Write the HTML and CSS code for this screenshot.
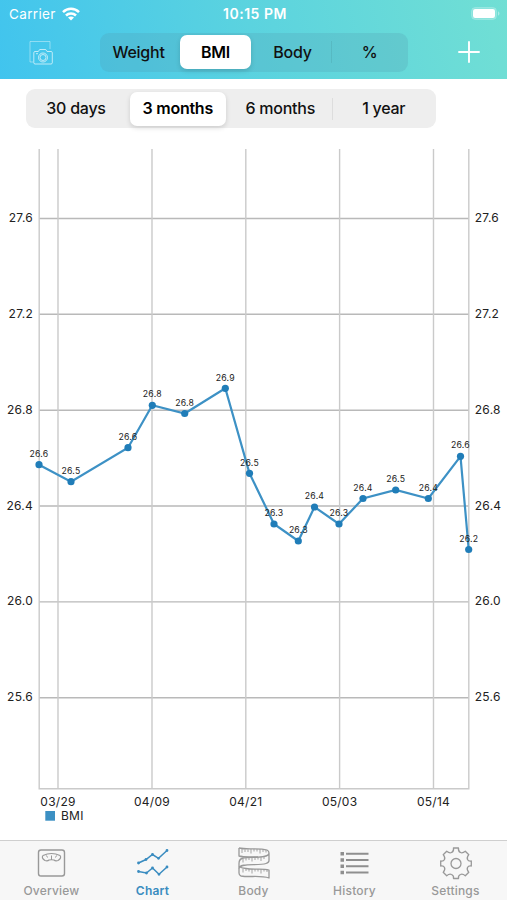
FILE: index.html
```html
<!DOCTYPE html>
<html lang="en">
  <head>
    <meta charset="UTF-8" />
    <meta name="viewport" content="width=device-width, initial-scale=1.0" />

    <title>BMI Chart</title>

    <link rel="stylesheet" href="styles.css">
  </head>
  <body>
    <header class="header">
      <div class="status">
        <div class="carrier">
          <span>Carrier</span>
          <svg width="18" height="14" viewBox="0 0 18 14" fill="none" stroke="#fff" stroke-width="2.5">
            <path d="M1 5.2C5.5 .7 12.5 .7 17 5.2" />
            <path d="M4 8.5c2.8-2.8 7.2-2.8 10 0" />
            <path d="M9 13.6 6 10.5c1.7-1.5 4.3-1.5 6 0z" fill="#fff" stroke="none" />
          </svg>
        </div>
        <div class="time">10:15 PM</div>
        <div class="power">
          <svg width="31" height="15" viewBox="0 0 31 15">
            <rect x="1.5" y="1.5" width="25" height="12" rx="3.8" fill="#fff" fill-opacity=".2" stroke="#fff" stroke-opacity=".2" />
            <rect x="3" y="3" width="22" height="9" rx="2.2" fill="#fff" />
            <path d="M28 5.3c2 .9 2 3.5 0 4.4z" fill="#fff" fill-opacity=".4" />
          </svg>
        </div>
      </div>

      <div class="navbar">
        <svg class="camera" width="26" height="26" viewBox="0 0 26 26" fill="none" stroke="#fff" stroke-opacity=".65">
          <path d="M4 22H1V1.5h20V9" stroke-opacity=".4" />
          <path d="M6 11.5h3.3l1.4-2h6l1.4 2h4c.7 0 1.2.5 1.2 1.2v10.1c0 .7-.5 1.2-1.2 1.2H6c-.7 0-1.2-.5-1.2-1.2V12.7C4.8 12 5.3 11.5 6 11.5z" />
          <circle cx="14" cy="17.5" r="4.5" />
          <circle cx="14" cy="17.5" r="3" />
          <path d="M7 13.7h2" />
        </svg>

        <div class="segments metric">
          <button class="segment">Weight</button>
          <button class="segment selected">BMI</button>
          <button class="segment">Body</button>
          <button class="segment divided">%</button>
        </div>

        <svg class="plus" width="22" height="22" viewBox="0 0 22 22" stroke="#fff" stroke-width="1.9" stroke-linecap="round">
          <path d="M11 1v20M1 11h20" />
        </svg>
      </div>
    </header>

    <main>
      <div class="segments range">
        <button class="segment">30 days</button>
        <button class="segment selected">3 months</button>
        <button class="segment">6 months</button>
        <button class="segment divided">1 year</button>
      </div>

      <svg class="chart" width="507" height="690" viewBox="0 140 507 690">
        <g class="grid">
          <path d="M39 218.5H469M39 314.3H469M39 410.2H469M39 506H469M39 601.9H469M39 697.7H469" />
          <path class="vertical" d="M58 149V789M152 149V789M245.8 149V789M339.6 149V789M433.5 149V789" />
          <path class="border" d="M39.2 149V788.7H468.8V149" />
        </g>

        <g class="axis left">
          <text x="33" y="221.7">27.6</text>
          <text x="33" y="317.7">27.2</text>
          <text x="33" y="413.5">26.8</text>
          <text x="33" y="509.5">26.4</text>
          <text x="33" y="605.3">26.0</text>
          <text x="33" y="701.2">25.6</text>
        </g>
        <g class="axis">
          <text x="474.8" y="221.7">27.6</text>
          <text x="474.8" y="317.7">27.2</text>
          <text x="474.8" y="413.5">26.8</text>
          <text x="474.8" y="509.5">26.4</text>
          <text x="474.8" y="605.3">26.0</text>
          <text x="474.8" y="701.2">25.6</text>
        </g>
        <g class="axis dates">
          <text x="58" y="805.8">03/29</text>
          <text x="152" y="805.8">04/09</text>
          <text x="245.8" y="805.8">04/21</text>
          <text x="339.6" y="805.8">05/03</text>
          <text x="433.5" y="805.8">05/14</text>
        </g>

        <polyline class="line" points="39,464.7 71,481.7 128,447.7 152.3,405.3 184.7,413.5 225.3,388.3 249.5,473.3 274,524 298.3,541 314.5,507 339,524 363,498.5 395.7,490 428.3,498.5 460.5,456.3 468.7,549.5" />
        <g class="dots">
          <circle cx="39" cy="464.7" r="3.6" />
          <circle cx="71" cy="481.7" r="3.6" />
          <circle cx="128" cy="447.7" r="3.6" />
          <circle cx="152.3" cy="405.3" r="3.6" />
          <circle cx="184.7" cy="413.5" r="3.6" />
          <circle cx="225.3" cy="388.3" r="3.6" />
          <circle cx="249.5" cy="473.3" r="3.6" />
          <circle cx="274" cy="524" r="3.6" />
          <circle cx="298.3" cy="541" r="3.6" />
          <circle cx="314.5" cy="507" r="3.6" />
          <circle cx="339" cy="524" r="3.6" />
          <circle cx="363" cy="498.5" r="3.6" />
          <circle cx="395.7" cy="490" r="3.6" />
          <circle cx="428.3" cy="498.5" r="3.6" />
          <circle cx="460.5" cy="456.3" r="3.6" />
          <circle cx="468.7" cy="549.5" r="3.6" />
        </g>
        <g class="values">
          <text x="39" y="456.8">26.6</text>
          <text x="71" y="473.8">26.5</text>
          <text x="128" y="439.9">26.6</text>
          <text x="152.3" y="397.4">26.8</text>
          <text x="184.7" y="405.7">26.8</text>
          <text x="225.3" y="380.6">26.9</text>
          <text x="249.5" y="465.5">26.5</text>
          <text x="274" y="516.2">26.3</text>
          <text x="298.3" y="533.3">26.3</text>
          <text x="314.5" y="499.2">26.4</text>
          <text x="339" y="516.2">26.3</text>
          <text x="363" y="490.8">26.4</text>
          <text x="395.7" y="482.3">26.5</text>
          <text x="428.3" y="490.8">26.4</text>
          <text x="460.5" y="448.2">26.6</text>
          <text x="468.7" y="542">26.2</text>
        </g>

        <rect x="45.3" y="811" width="9.7" height="9.7" fill="#3c90c3" />
        <text class="legend" x="61" y="820.3">BMI</text>
      </svg>
    </main>

    <nav class="tabbar">
      <div class="tab">
        <svg width="32" height="34" viewBox="0 0 32 34" fill="none" stroke="#999" stroke-width="1.4">
          <rect x="2.5" y="4" width="26" height="26" rx="2.5" />
          <path d="M7 9.5Q15.500 5.500 24 9.500Q26 12 22 14.500Q19.500 15.500 18 14Q15.500 13.500 13 14Q11.500 15.500 9 14.500Q5 12 7 9.500z" stroke-width="1.2" />
          <path d="M15.500 14V9.500M11.500 11.500l-1-2M19.500 11.500l1-2" stroke-width="1" />
        </svg>
        <span>Overview</span>
      </div>
      <div class="tab active">
        <svg width="32" height="34" viewBox="0 0 32 34" fill="none" stroke="#3a8cc0" stroke-width="1.5">
          <path d="M1.5 17 9 13.5l6.500-5 6 3.800L30 4.500" />
          <path d="M1.5 25.5 9.5 27l6-5 6.500 6.300L30 21" />
          <path d="M1.5 17h0M9 13.5h0M15.500 8.500h0M21.500 12.300h0M30 4.500h0M1.500 25.500h0M9.500 27h0M15.500 22h0M22 28.300h0M30 21h0" stroke-width="2.8" stroke-linecap="round" />
        </svg>
        <span>Chart</span>
      </div>
      <div class="tab">
        <svg width="32" height="34" viewBox="0 0 32 34" fill="none" stroke="#999" stroke-width="1.3" stroke-linejoin="round">
          <path d="M1 2C9 4 21 1.5 29 4Q31 5 31 7V14.5Q31 16.5 28 17.5C20 20 1 16.5 1 22.5V17.5Q1 13 5 12C12 10.5 31 13 31 7" />
          <path d="M1 2v8C7 11.5 13 10.5 20 11" />
          <path d="M1 22.5V27Q1 29.5 3 30C12 31.5 22 29 31 32V24C24 22 16 24 8 22.5Q3 22 1 20.5" />
          <path d="M4 3v4M7 3.5V6M10 3.5V6M13 3v4.5M16 3v2.5M19 3v2.5M22 3v4.5M25 3.5V6M28 4v2.5M5 12.5v4M8 12v2.5M11 11.5V14M14 11.5v4M17 11.5V14M20 11v2.5M23 11v4M26 10.5V13M5 22.5v4M8 22.5V25M11 23v2.5M14 23v4.5M17 23v2.5M20 23v2.5M23 23v4.5M26 23v2.5M29 23.5V26" stroke-width=".9" />
        </svg>
        <span>Body</span>
      </div>
      <div class="tab">
        <svg width="32" height="34" viewBox="0 0 32 34" fill="#8f8f8f">
          <path d="M1.5 6H5v3.500H1.500zM1.500 12.300H5v3.500H1.500zM1.500 18.500H5V22H1.500zM1.500 24.700H5v3.500H1.500z" />
          <path d="M7 6.700H29.500v2.100H7zM7 13H29.500v2.100H7zM7 19.200H29.500v2.100H7zM7 25.400H29.500v2.100H7z" />
        </svg>
        <span>History</span>
      </div>
      <div class="tab">
        <svg width="32" height="34" viewBox="0 0 32 34" fill="none" stroke="#999" stroke-width="1.3" stroke-linejoin="round">
          <path d="M13.5 2h5Q18 5.5 20.5 6.5Q22.5 7.5 25.3 5.2L28.8 8.7Q26.5 11.5 27.5 13.5Q28.5 15.5 31.3 15V20Q28.5 19.5 27.5 21.5Q26.5 23.5 28.8 26.3L25.3 29.8Q22.5 27.5 20.5 28.5Q18 29.5 18.5 32.5H13.5Q14 29.5 11.5 28.5Q9.5 27.5 6.7 29.8L3.2 26.3Q5.5 23.5 4.5 21.5Q3.5 19.5.7 20V15Q3.5 15.5 4.5 13.5Q5.5 11.5 3.2 8.7L6.7 5.2Q9.5 7.5 11.5 6.5Q14 5.5 13.5 2z" />
          <circle cx="16" cy="17.5" r="5" />
        </svg>
        <span>Settings</span>
      </div>
    </nav>
  </body>
</html>
```
FILE: styles.css
```css
body {
  display: flex;
  flex-direction: column;
  height: 900px;
  margin: 0;
  overflow: hidden;
  background-color: #fff;
  color: #111;
  font-family: Inter, "Liberation Sans", sans-serif;
}
main {
  flex: 1;
}
svg {
  display: block;
}

.header {
  height: 79px;
  background: linear-gradient(75deg, #41c4ee, #5bd3df 50%, #71dfd4);
}
.status {
  display: grid;
  grid-template-columns: 1fr auto 1fr;
  align-items: center;
  height: 27px;
  padding: 0 6px 0 9px;
  color: #fff;
  font-size: 13.5px;
}
.carrier {
  display: flex;
  align-items: center;
  gap: 6px;
  letter-spacing: 0.35px;
}
.time {
  font-size: 14px;
  font-weight: 600;
  letter-spacing: 0.5px;
}
.power {
  justify-self: end;
}
.navbar {
  display: flex;
  align-items: center;
  height: 50px;
}
.camera {
  margin: 1px 45px 0 29px;
}
.plus {
  margin-left: 50px;
}

.segments {
  display: grid;
  grid-template-columns: repeat(4, 1fr);
  box-sizing: border-box;
  height: 39px;
  padding: 2.5px 0;
  border-radius: 9px;
}
.metric {
  width: 308px;
  background-color: rgba(80, 150, 175, 0.23);
}
.range {
  grid-template-columns: 101px 102.5px 102.5px 1fr;
  width: 410.5px;
  margin: 10px 0 12px 25.5px;
  background-color: #eee;
}
.segment {
  margin: 0;
  padding: 0 0 1px;
  border: 0;
  border-radius: 7px;
  background: none;
  color: #111;
  font-family: inherit;
  font-size: 16px;
  font-weight: 500;
  letter-spacing: -0.25px;
}
.segments .selected {
  margin: 0 3px;
  background-color: #fff;
  color: #000;
  font-weight: 600;
  box-shadow: 0 2px 5px rgba(0, 0, 0, 0.14);
}
.metric .divided,
.range .divided {
  background: linear-gradient(rgba(0, 0, 0, 0.07), rgba(0, 0, 0, 0.07)) left center / 1px 22px no-repeat;
  border-radius: 0;
}

.grid path {
  fill: none;
  stroke: #b9b9b9;
  stroke-width: 1.4;
}
.grid .vertical,
.grid .border {
  stroke: #cacaca;
}
.axis text,
.legend {
  font-size: 12px;
  letter-spacing: 0.25px;
  fill: #222;
}
.left text {
  text-anchor: end;
}
.dates text,
.values text {
  text-anchor: middle;
}
.values text {
  font-size: 8.7px;
  letter-spacing: 0.2px;
  fill: #222;
}
.line {
  fill: none;
  stroke: #3d91c5;
  stroke-width: 2.2;
}
.dots {
  fill: #207db8;
}

.tabbar {
  display: grid;
  grid-template-columns: repeat(5, 101px);
  justify-content: center;
  box-sizing: border-box;
  height: 60px;
  border-top: 1px solid #cfcfcf;
  background-color: #f7f7f7;
}
.tab {
  display: flex;
  flex-direction: column;
  align-items: center;
  padding-top: 5px;
  color: #999;
  font-size: 12px;
  font-weight: 500;
  letter-spacing: 0.2px;
}
.tab span {
  margin-top: 3px;
}
.active {
  color: #3a8cc0;
  font-weight: 600;
}
```
